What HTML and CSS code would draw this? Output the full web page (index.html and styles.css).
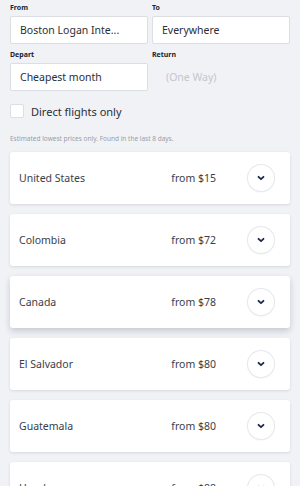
FILE: index.html
```html
<!DOCTYPE html>
<html>
<head>
<meta charset="utf-8">
<link rel="stylesheet" href="styles.css">
</head>
<body>
<div class="page">
  <div class="form">
    <div class="field">
      <div class="label">From</div>
      <div class="input">Boston Logan Inte...</div>
    </div>
    <div class="field">
      <div class="label">To</div>
      <div class="input">Everywhere</div>
    </div>
    <div class="field">
      <div class="label">Depart</div>
      <div class="input">Cheapest month</div>
    </div>
    <div class="field">
      <div class="label">Return</div>
      <div class="input disabled">(One Way)</div>
    </div>
  </div>
  <label class="check"><span class="box"></span><span>Direct flights only</span></label>
  <div class="note">Estimated lowest prices only. Found in the last 8 days.</div>
  <div class="list">
    <div class="card"><span class="name">United States</span><span class="price">from $15</span><span class="btn"><svg viewBox="0 0 10 10" width="10" height="10"><path d="M2.5 3.8 L5 6.2 L7.5 3.8" fill="none" stroke="#1b2a4a" stroke-width="1.8" stroke-linecap="round" stroke-linejoin="round"/></svg></span></div>
    <div class="card"><span class="name">Colombia</span><span class="price">from $72</span><span class="btn"><svg viewBox="0 0 10 10" width="10" height="10"><path d="M2.5 3.8 L5 6.2 L7.5 3.8" fill="none" stroke="#1b2a4a" stroke-width="1.8" stroke-linecap="round" stroke-linejoin="round"/></svg></span></div>
    <div class="card raised"><span class="name">Canada</span><span class="price">from $78</span><span class="btn"><svg viewBox="0 0 10 10" width="10" height="10"><path d="M2.5 3.8 L5 6.2 L7.5 3.8" fill="none" stroke="#1b2a4a" stroke-width="1.8" stroke-linecap="round" stroke-linejoin="round"/></svg></span></div>
    <div class="card"><span class="name">El Salvador</span><span class="price">from $80</span><span class="btn"><svg viewBox="0 0 10 10" width="10" height="10"><path d="M2.5 3.8 L5 6.2 L7.5 3.8" fill="none" stroke="#1b2a4a" stroke-width="1.8" stroke-linecap="round" stroke-linejoin="round"/></svg></span></div>
    <div class="card"><span class="name">Guatemala</span><span class="price">from $80</span><span class="btn"><svg viewBox="0 0 10 10" width="10" height="10"><path d="M2.5 3.8 L5 6.2 L7.5 3.8" fill="none" stroke="#1b2a4a" stroke-width="1.8" stroke-linecap="round" stroke-linejoin="round"/></svg></span></div>
    <div class="card"><span class="name">Honduras</span><span class="price">from $88</span><span class="btn"><svg viewBox="0 0 10 10" width="10" height="10"><path d="M2.5 3.8 L5 6.2 L7.5 3.8" fill="none" stroke="#1b2a4a" stroke-width="1.8" stroke-linecap="round" stroke-linejoin="round"/></svg></span></div>
  </div>
</div>
</body>
</html>
```
FILE: styles.css
```css
* { box-sizing: border-box; }
html, body { margin: 0; padding: 0; }
body {
  background: #f1f2f6;
  font-family: "Noto Sans", "Liberation Sans", sans-serif;
  color: #2b2f3a;
  width: 300px;
  height: 486px;
  overflow: hidden;
}
.page { padding: 3px 10px 0 10px; }
.form {
  display: grid;
  grid-template-columns: 138px 138px;
  column-gap: 4px;
  row-gap: 6px;
}
.label {
  font-size: 7px;
  font-weight: 700;
  line-height: 9px;
  height: 9px;
  margin-bottom: 4px;
  color: #20242e;
}
.input {
  height: 28px;
  background: #fff;
  border: 1px solid #dcdee4;
  border-radius: 2px;
  font-size: 10.5px;
  line-height: 26px;
  padding-left: 9px;
  color: #2a2e38;
  white-space: nowrap;
  overflow: hidden;
}
.input.disabled {
  background: transparent;
  border-color: transparent;
  color: #c3c6ce;
  padding-left: 13px;
}
.check {
  display: flex;
  align-items: center;
  gap: 7px;
  margin-top: 13px;
  font-size: 11px;
  color: #2a2e38;
  height: 14px;
}
.box {
  width: 14px;
  height: 14px;
  background: #fff;
  border: 1px solid #dcdee4;
  border-radius: 2px;
}
.note {
  margin-top: 17px;
  font-size: 6.5px;
  line-height: 8px;
  color: #9a9da6;
}
.list {
  margin-top: 9px;
  display: flex;
  flex-direction: column;
  gap: 10px;
}
.card {
  height: 52px;
  background: #fff;
  border-radius: 3px;
  box-shadow: 0 1px 3px rgba(30, 35, 60, 0.12);
  display: flex;
  align-items: center;
  padding: 0 16px 0 9px;
  font-size: 10.5px;
  color: #3a3e48;
}
.card.raised { box-shadow: 0 3px 6px rgba(30, 35, 60, 0.2); }
.name { flex: 1; }
.price { margin-right: 32px; }
.btn {
  width: 26px;
  height: 26px;
  border-radius: 50%;
  background: #fff;
  box-shadow: 0 0 0 1px #e6e8ee, 0 1px 2px rgba(30,35,60,0.1);
  display: flex;
  align-items: center;
  justify-content: center;
}
.btn svg { display: block; }
```
